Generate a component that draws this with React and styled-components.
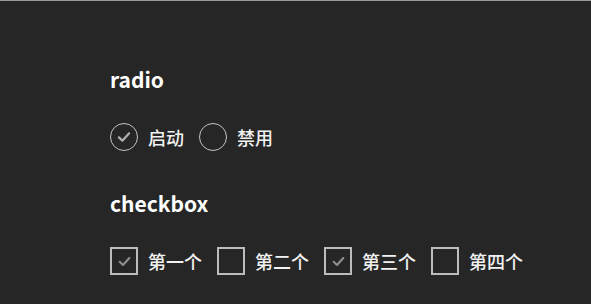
import React, { useState } from 'react';
import styled, { createGlobalStyle } from 'styled-components';

const GlobalStyle = createGlobalStyle`
	html, body {
		margin: 0;
		padding: 0;
		background: #262626;
	}
	body {
		font-family: "Noto Sans CJK SC", "Noto Sans", sans-serif;
	}
`;

const Page = styled.div`
	box-sizing: border-box;
	height: 304px;
	border-top: 1px solid #9c9c9c;
	padding: 66px 0 0 110px;
	display: flex;
	flex-direction: column;
	gap: 40px;
`;

const Section = styled.section`
	display: flex;
	flex-direction: column;
	gap: 32px;
`;

const Title = styled.h2`
	margin: 0;
	height: 24px;
	font-size: 21px;
	line-height: 24px;
	font-weight: 700;
	color: #ffffff;
`;

const Row = styled.div`
	display: flex;
	align-items: center;
	gap: 15px;
	height: 28px;
`;

const Item = styled.label`
	display: flex;
	align-items: center;
	gap: 10px;
	cursor: pointer;
`;

const Circle = styled.span`
	box-sizing: border-box;
	width: 28px;
	height: 28px;
	border-radius: 50%;
	border: 1.5px solid #c4c4c4;
	display: flex;
	align-items: center;
	justify-content: center;
`;

const Square = styled.span`
	box-sizing: border-box;
	width: 28px;
	height: 28px;
	border: 2px solid #bcbcbc;
	display: flex;
	align-items: center;
	justify-content: center;
`;

const Label = styled.span`
	font-size: 18px;
	line-height: 28px;
	font-weight: 500;
	color: #f2f2f2;
`;

const Check = ({ size = 14, color = '#9a9a9a', weight = 1.8 }) => (
	<svg width={size} height={size} viewBox="0 0 14 14" fill="none">
		<path d="M2.5 7.3 L5.6 10.2 L11.5 3.8" stroke={color} strokeWidth={weight} strokeLinecap="round" strokeLinejoin="round" />
	</svg>
);

export default function App() {
	const [radio, setRadio] = useState('on');
	const [checks, setChecks] = useState([true, false, true, false]);
	const names = ['第一个', '第二个', '第三个', '第四个'];

	return (
		<>
			<GlobalStyle />
			<Page>
				<Section>
					<Title>radio</Title>
					<Row>
						<Item onClick={() => setRadio('on')}>
							<Circle>{radio === 'on' && <Check size={16} color="#b0b0b0" weight={1.9} />}</Circle>
							<Label>启动</Label>
						</Item>
						<Item onClick={() => setRadio('off')}>
							<Circle>{radio === 'off' && <Check size={16} color="#b0b0b0" weight={1.9} />}</Circle>
							<Label>禁用</Label>
						</Item>
					</Row>
				</Section>
				<Section>
					<Title>checkbox</Title>
					<Row>
						{names.map((n, i) => (
							<Item key={n} onClick={() => setChecks(checks.map((c, j) => (j === i ? !c : c)))}>
								<Square>{checks[i] && <Check size={15} color="#8e8e8e" weight={2} />}</Square>
								<Label>{n}</Label>
							</Item>
						))}
					</Row>
				</Section>
			</Page>
		</>
	);
}
